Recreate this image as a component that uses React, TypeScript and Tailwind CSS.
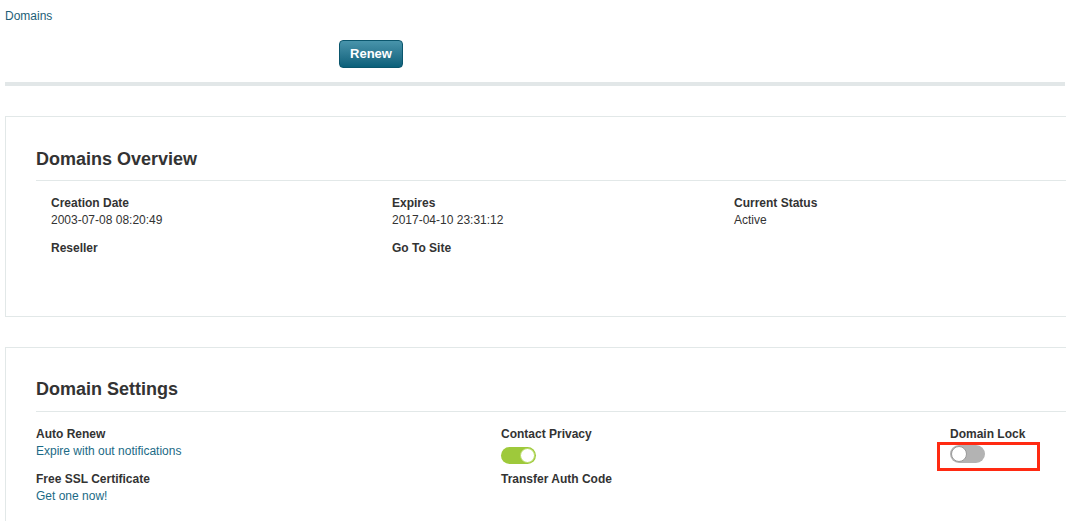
import React from "react";

function Label({ children }: { children: React.ReactNode }) {
  return <div className="text-[12px] font-bold leading-[17px] text-[#333]">{children}</div>;
}

function Value({ children, link }: { children?: React.ReactNode; link?: boolean }) {
  return (
    <div className={`text-[12px] leading-[17px] ${link ? "text-[#1b6a86]" : "text-[#333]"}`}>
      {children}
    </div>
  );
}

function ToggleOn() {
  return (
    <div className="flex h-[17px] w-[35px] items-center justify-end rounded-full bg-[#9ec93b] pr-[1px]">
      <div className="h-[15px] w-[15px] rounded-full border border-[#b8dc66] bg-white" />
    </div>
  );
}

function ToggleOff() {
  return (
    <div className="flex h-[18px] w-[35px] items-center justify-start rounded-full bg-[#b3b3b3] pl-[1px]">
      <div className="h-[16px] w-[16px] rounded-full border border-[#9a9a9a] bg-white" />
    </div>
  );
}

export default function App() {
  return (
    <div className="h-[521px] w-[1066px] overflow-hidden bg-white font-['Liberation_Sans',Arial,Helvetica,sans-serif] text-[#333]">
      <div className="pl-[5px] pt-[8px] text-[12px] leading-[16px] text-[#1d5e77]">Domains</div>

      <div className="ml-[339px] mt-[16px]">
        <button className="h-[28px] w-[64px] rounded-[4px] border border-[#0b566d] bg-gradient-to-b from-[#4894ab] to-[#09607a] text-[13px] font-bold text-white">
          Renew
        </button>
      </div>

      <div className="ml-[5px] mr-[1px] mt-[14px] h-[4px] bg-[#e2e7e8]" />

      {/* Domains Overview */}
      <div className="ml-[5px] mt-[30px] border-b border-l border-t border-[#e2e8e8] pb-[59px] pl-[30px] pt-[32px]">
        <h2 className="border-b border-[#e2e8e8] pb-[11px] text-[18px] font-bold leading-[20px] text-[#333]">
          Domains Overview
        </h2>
        <div className="grid grid-cols-[341px_342px_342px] gap-y-[11px] pt-[14px]">
          <div className="pl-[15px]">
            <Label>Creation Date</Label>
            <Value>2003-07-08 08:20:49</Value>
          </div>
          <div className="pl-[15px]">
            <Label>Expires</Label>
            <Value>2017-04-10 23:31:12</Value>
          </div>
          <div className="pl-[15px]">
            <Label>Current Status</Label>
            <Value>Active</Value>
          </div>
          <div className="pl-[15px]">
            <Label>Reseller</Label>
          </div>
          <div className="pl-[15px]">
            <Label>Go To Site</Label>
          </div>
          <div />
        </div>
      </div>

      {/* Domain Settings */}
      <div className="ml-[5px] mt-[30px] h-[300px] border-l border-t border-[#e2e8e8] pl-[30px] pt-[31px]">
        <h2 className="border-b border-[#e2e8e8] pb-[12px] text-[18px] font-bold leading-[20px] text-[#333]">
          Domain Settings
        </h2>
        <div className="flex pt-[14px]">
          <div className="flex w-[465px] flex-col gap-y-[11px]">
            <div>
              <Label>Auto Renew</Label>
              <Value link>Expire with out notifications</Value>
            </div>
            <div>
              <Label>Free SSL Certificate</Label>
              <Value link>Get one now!</Value>
            </div>
          </div>
          <div className="flex w-[449px] flex-col">
            <Label>Contact Privacy</Label>
            <div className="mt-[4px]">
              <ToggleOn />
            </div>
            <div className="mt-[7px]">
              <Label>Transfer Auth Code</Label>
            </div>
          </div>
          <div className="flex flex-col">
            <Label>Domain Lock</Label>
            <div className="relative mt-[2px]">
              <ToggleOff />
              <div className="absolute left-[-13px] top-[-3px] h-[29px] w-[103px] border-[3px] border-[#ff2a12]" />
            </div>
          </div>
        </div>
      </div>
    </div>
  );
}
